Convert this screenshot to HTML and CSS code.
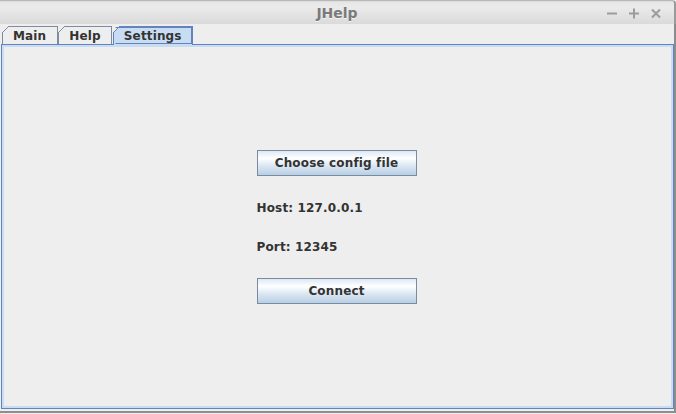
FILE: index.html
```html
<!DOCTYPE html>
<html>
<head>
<meta charset="utf-8">
<link rel="stylesheet" href="styles.css">
</head>
<body>
<div class="window">
  <div class="titlebar">
    <span></span>
    <span class="title">JHelp</span>
    <div class="controls">
      <svg class="ctl" width="14" height="14" viewBox="0 0 14 14"><path d="M2 7.5h10" stroke="#9c9c9c" stroke-width="2"/></svg>
      <svg class="ctl" width="14" height="14" viewBox="0 0 14 14"><path d="M2 7.5h10M7 2.5v10" stroke="#9c9c9c" stroke-width="2"/></svg>
      <svg class="ctl" width="14" height="14" viewBox="0 0 14 14"><path d="M3 3.5l8 8M11 3.5l-8 8" stroke="#9c9c9c" stroke-width="2"/></svg>
    </div>
  </div>
  <div class="frame">
    <div class="tabstrip">
      <div class="tab">Main</div>
      <div class="tab">Help</div>
      <div class="tab selected">Settings</div>
    </div>
    <div class="panel">
      <div class="form">
        <div class="button">Choose config file</div>
        <div class="label">Host: 127.0.0.1</div>
        <div class="label">Port: 12345</div>
        <div class="button">Connect</div>
      </div>
    </div>
  </div>
</div>
</body>
</html>
```

FILE: styles.css
```css
* { box-sizing: border-box; }
html, body {
  margin: 0;
  padding: 0;
  background: #eeeeee;
}
body {
  width: 676px;
  height: 414px;
  overflow: hidden;
  font-family: "DejaVu Sans", "Liberation Sans", sans-serif;
  font-weight: bold;
  font-size: 12px;
  letter-spacing: 0.15px;
  color: #333333;
}
.window {
  width: 676px;
  height: 414px;
  display: flex;
  flex-direction: column;
}
.titlebar {
  height: 24px;
  flex: none;
  display: grid;
  grid-template-columns: 1fr auto 1fr;
  align-items: center;
  background: linear-gradient(to bottom, #d4d4d4 0, #e6e6e6 1px, #ebebeb 6px, #dadada 100%);
  border-top-right-radius: 4px;
  border-right: 2px solid #9a9a9a;
  border-top: 1px solid #b8b8b8;
}
.title {
  font-size: 14px;
  letter-spacing: 0;
  color: #7a7a7a;
  text-shadow: 0 1px 0 rgba(255,255,255,0.6);
  padding-top: 1px;
}
.controls {
  display: flex;
  justify-content: flex-end;
  gap: 8px;
  padding-right: 11px;
  padding-top: 1px;
}
.ctl { display: block; }
.frame {
  flex: 1;
  display: flex;
  flex-direction: column;
  padding-left: 1px;
  padding-bottom: 2px;
  border-right: 2px solid #8c8c8c;
  border-bottom: 2px solid #8e8e8e;
  margin-bottom: 1px;
}
.tabstrip {
  height: 20px;
  flex: none;
  display: flex;
  align-items: flex-end;
  padding-left: 2px;
}
.tab {
  position: relative;
  height: 18px;
  padding: 2px 10px 0 10px;
  line-height: 15px;
  border: 1px solid #7d8ca3;
  border-bottom: none;
  background: #eeeeee;
  color: #333333;
}
.tab:first-child {
  margin-left: -1px;
  padding-right: 11px;
}
.tab::before {
  content: "";
  position: absolute;
  top: -1px;
  left: -1px;
  width: 7px;
  height: 7px;
  background: linear-gradient(135deg, #eeeeee 0, #eeeeee calc(50% - 0.7px), #7d8ca3 calc(50% - 0.7px), #7d8ca3 calc(50% + 0.7px), transparent calc(50% + 0.7px));
}
.tab.selected {
  margin-left: 1px;
  height: 19px;
  margin-bottom: -1px;
  z-index: 1;
  background: #c8ddf2;
  border-color: #6382bf;
}
.tab.selected::before {
  background: linear-gradient(135deg, #eeeeee 0, #eeeeee calc(50% - 0.7px), #6382bf calc(50% - 0.7px), #6382bf calc(50% + 0.7px), transparent calc(50% + 0.7px));
}
.tab.selected::after {
  content: "";
  position: absolute;
  top: 0;
  left: 1px;
  right: 0;
  bottom: 1px;
  border: 1px solid #6382bf;
  border-left-color: transparent;
}
.panel {
  flex: 1;
  display: flex;
  align-items: center;
  justify-content: center;
  padding-right: 2px;
  border: 1px solid #6382bf;
  box-shadow: inset 0 0 0 2px #c8ddf2;
  background: #eeeeee;
}
.form {
  width: 160px;
  display: flex;
  flex-direction: column;
  gap: 24px;
}
.button {
  height: 26px;
  padding-top: 2px;
  border: 1px solid #7a8ba0;
  background: linear-gradient(to bottom, #dde8f3 0%, #ffffff 30%, #dde8f3 60%, #b8cfe5 100%);
  display: flex;
  align-items: center;
  justify-content: center;
  line-height: 15px;
  color: #333333;
}
.label {
  height: 15px;
  padding-top: 1px;
  line-height: 15px;
  color: #333333;
}
```
